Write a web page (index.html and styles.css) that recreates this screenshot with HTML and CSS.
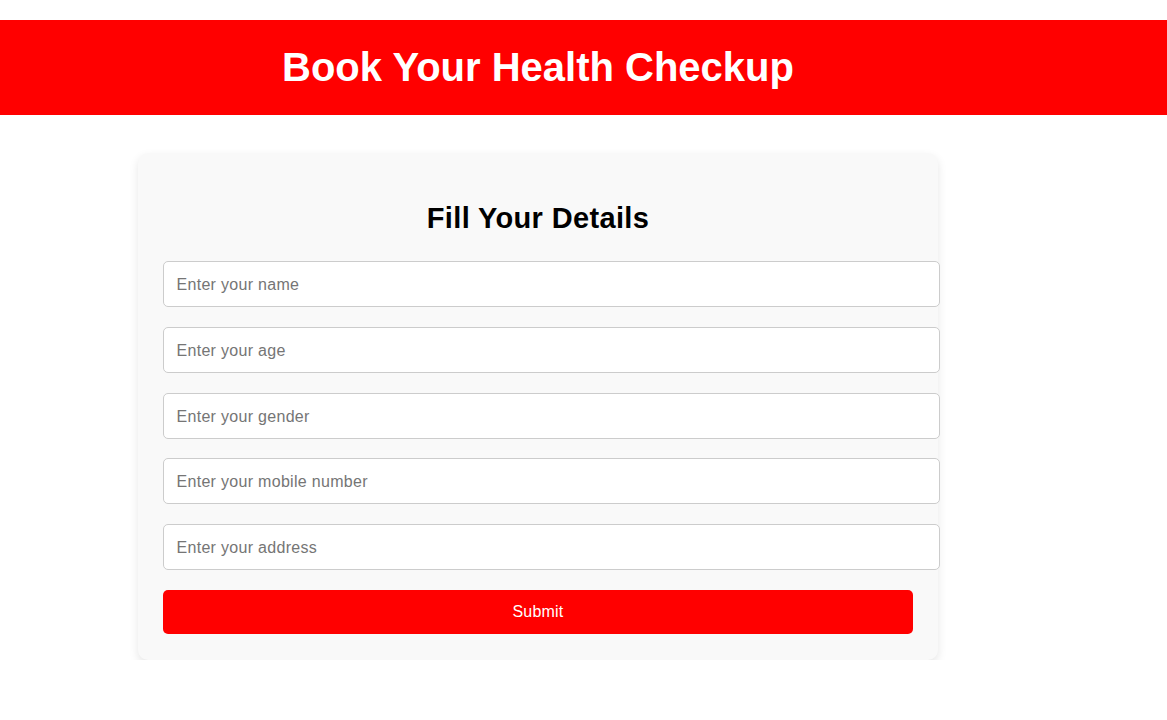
FILE: index.html
```html
<!DOCTYPE html>
<html lang="en">
<head>
<meta charset="utf-8">
<title>Book Your Health Checkup</title>
<link rel="stylesheet" href="styles.css">
</head>
<body>
<header class="site-header">
  <div class="wrap">
    <h1 class="site-title">Book Your Health Checkup</h1>
  </div>
</header>
<main class="wrap">
  <form class="card">
    <h2 class="card-title">Fill Your Details</h2>
    <input class="field" type="text" placeholder="Enter your name">
    <input class="field" type="text" placeholder="Enter your age">
    <input class="field" type="text" placeholder="Enter your gender">
    <input class="field" type="text" placeholder="Enter your mobile number">
    <input class="field" type="text" placeholder="Enter your address">
    <button class="submit" type="button">Submit</button>
  </form>
</main>
</body>
</html>
```
FILE: styles.css
```css
html, body {
  margin: 0;
  padding: 0;
  background: #ffffff;
  font-family: "Liberation Sans", Arial, sans-serif;
}

.wrap {
  width: 800px;
  margin-left: 138px;
}

.site-header {
  margin-top: 20px;
  background: #ff0000;
  padding: 24px 0 25px;
}

.site-title {
  margin: 0;
  font-size: 40px;
  line-height: 46px;
  font-weight: bold;
  color: #ffffff;
  text-align: center;
}

main.wrap {
  margin-top: 38px;
}

.card {
  box-sizing: border-box;
  width: 800px;
  background: #f9f9f9;
  border-radius: 10px;
  box-shadow: 0 4px 10px rgba(0, 0, 0, 0.1);
  padding: 25px 25px 26px;
  display: flex;
  flex-direction: column;
  align-items: flex-start;
}

.card-title {
  align-self: stretch;
  margin: 24px 0 26px;
  font-size: 29px;
  line-height: 33px;
  letter-spacing: 0.35px;
  font-weight: bold;
  color: #000000;
  text-align: center;
}

.field {
  width: 750px;
  box-sizing: content-box;
  padding: 13px 12.5px 11px;
  margin: 0 0 19.75px;
  border: 1px solid #cccccc;
  border-radius: 5px;
  background: #ffffff;
  font-family: "Liberation Sans", Arial, sans-serif;
  font-size: 16px;
  letter-spacing: 0.3px;
  line-height: 20px;
  height: 20px;
  color: #000000;
  outline: none;
}

.field::placeholder {
  color: #757575;
}

.submit {
  width: 750px;
  height: 44px;
  border: none;
  border-radius: 5px;
  background: #ff0000;
  color: #ffffff;
  font-family: "Liberation Sans", Arial, sans-serif;
  font-size: 16px;
  letter-spacing: 0.2px;
  cursor: pointer;
}
```
